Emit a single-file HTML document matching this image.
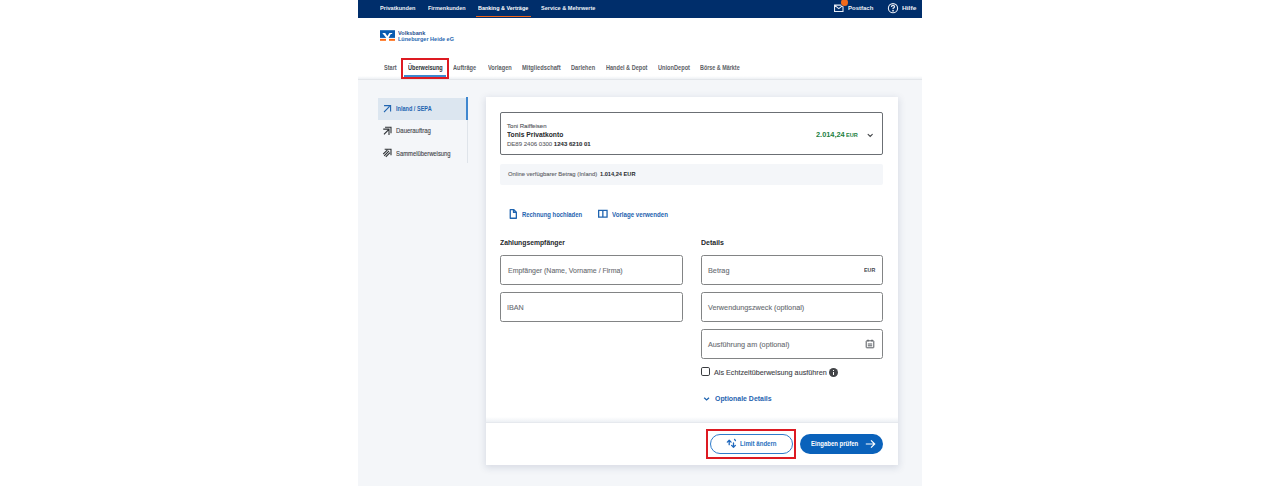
<!DOCTYPE html>
<html><head><meta charset="utf-8"><title>Überweisung</title>
<style>
html,body{margin:0;padding:0;width:1280px;height:486px;overflow:hidden;background:#ffffff;}
body{position:relative;font-family:"Liberation Sans",sans-serif;}
.a{position:absolute;box-sizing:border-box;}
.t{position:absolute;white-space:nowrap;line-height:1;transform-origin:0 0;font-family:"Liberation Sans",sans-serif;}
</style></head><body>
<!-- page frame -->
<div class="a" style="left:358px;top:0;width:564px;height:486px;background:#f4f6f9;"></div>
<!-- top navy bar -->
<div class="a" style="left:358px;top:0;width:564px;height:18px;background:#002e6b;"></div>
<div class="a" style="left:476px;top:15.8px;width:55px;height:1.6px;background:#f06418;"></div>
<!-- white header -->
<div class="a" style="left:358px;top:18px;width:564px;height:62px;background:#ffffff;border-bottom:1px solid #e3e6ea;"></div>
<div class="a" style="left:358px;top:76px;width:564px;height:3px;background:linear-gradient(to bottom,rgba(236,239,243,0),rgba(236,239,243,0.9));"></div>
<!-- logo -->
<svg class="a" style="left:380px;top:30px;" width="15" height="11" viewBox="0 0 15 11">
  <rect x="0" y="0.2" width="15" height="7.7" fill="#0a5cb0"/>
  <rect x="0" y="8.9" width="6" height="1.9" fill="#ff6a10"/>
  <rect x="9" y="8.9" width="6" height="1.9" fill="#ff6a10"/>
  <path d="M2.3 2.9 H5.2 L7.3 6.3 L9.4 2.9 H12.4 L12 4 H10.8 L8.6 7.9 H6.3 Z" fill="#ffffff"/>
</svg>
<!-- red highlight nav -->
<div class="a" style="left:401px;top:58px;width:48px;height:21px;border:2px solid #dd1a22;"></div>
<div class="a" style="left:404px;top:75px;width:42px;height:2px;background:#3c87cf;"></div>

<!-- sidebar -->
<div class="a" style="left:466.5px;top:98px;width:1px;height:65px;background:#dfe4ea;"></div>
<div class="a" style="left:378px;top:98px;width:88px;height:22px;background:#dce6f0;"></div>
<div class="a" style="left:466px;top:97px;width:2px;height:23px;background:#3f87cf;"></div>
<!-- sidebar icons -->
<svg class="a" style="left:380px;top:100px;" width="16" height="16" viewBox="0 0 16 16" fill="none" stroke="#1f64b0" stroke-width="1.1" stroke-linecap="square">
  <path d="M4.6 5.6 H10.6 V11 M4.4 11.6 L9.2 6.8"/>
</svg>
<svg class="a" style="left:380px;top:123px;" width="16" height="16" viewBox="0 0 16 16" fill="none" stroke="#2e3236" stroke-width="1.1" stroke-linecap="square">
  <path d="M5.6 4.3 H11 V9.6 M3.8 6.1 H9 V11.4 M4.4 10.9 L8 7.3"/>
</svg>
<svg class="a" style="left:380px;top:145px;" width="16" height="16" viewBox="0 0 16 16" fill="none" stroke="#2e3236" stroke-width="1.1" stroke-linecap="square">
  <path d="M5.2 4.3 H11 V9.8 M3.6 8.6 L7 5.3 M4.6 10.4 L8.6 6.4 M6.2 11.4 L9.6 8"/>
</svg>
<!-- card -->
<div class="a" style="left:486px;top:97px;width:412px;height:368px;background:#ffffff;box-shadow:0 2px 7px 1px rgba(30,50,95,0.13);"></div>
<!-- account box -->
<div class="a" style="left:500px;top:112px;width:383px;height:43px;border:1px solid #6b6f74;border-radius:2px;background:#fff;"></div>
<svg class="a" style="left:867px;top:132px;" width="7" height="6" viewBox="0 0 7 6" fill="none" stroke="#44474a" stroke-width="1.1" stroke-linecap="round">
  <path d="M1.1 2.3 L3.2 4.4 L5.3 2.3"/>
</svg>
<!-- available amount bar -->
<div class="a" style="left:500px;top:164px;width:383px;height:21px;background:#f4f6f9;border-radius:2px;"></div>

<!-- link icons -->
<svg class="a" style="left:504px;top:205px;" width="20" height="18" viewBox="0 0 20 18" fill="none" stroke="#1f64b0" stroke-width="1.3" stroke-linejoin="round">
  <path d="M6.25 4.55 H9.6 L12.35 7.3 V13.25 H6.25 Z M9.5 4.6 V7.4 H12.3"/>
</svg>
<svg class="a" style="left:590px;top:203px;" width="25" height="20" viewBox="0 0 25 20" fill="none" stroke="#1f64b0" stroke-width="1.3">
  <path d="M8.65 7.45 H17.05 V14.1 H8.65 Z M12.85 7.45 V14.1"/>
</svg>
<!-- inputs -->
<div class="a" style="left:500px;top:255px;width:183px;height:30px;border:1px solid #828485;border-radius:2.5px;"></div>
<div class="a" style="left:500px;top:292px;width:183px;height:30px;border:1px solid #828485;border-radius:2.5px;"></div>
<div class="a" style="left:701px;top:255px;width:182px;height:30px;border:1px solid #828485;border-radius:2.5px;"></div>
<div class="a" style="left:701px;top:292px;width:182px;height:30px;border:1px solid #828485;border-radius:2.5px;"></div>
<div class="a" style="left:701px;top:329px;width:182px;height:30px;border:1px solid #828485;border-radius:2.5px;"></div>
<!-- calendar icon -->
<svg class="a" style="left:865px;top:339px;" width="10" height="10" viewBox="0 0 10 10" fill="none" stroke="#55595e" stroke-width="1">
  <rect x="1.2" y="1.8" width="7.6" height="7" rx="0.5"/>
  <path d="M3 0.6 V2.6 M7 0.6 V2.6 M2.8 5 H7.2 M2.8 6.8 H7.2"/>
</svg>
<!-- checkbox -->
<div class="a" style="left:701px;top:367px;width:9.2px;height:9.2px;border:1.3px solid #393c40;border-radius:1.8px;"></div>
<!-- info icon -->
<div class="a" style="left:828.7px;top:367.7px;width:9.5px;height:9.5px;border-radius:50%;background:#434548;"></div>
<div class="a" style="left:833px;top:371.5px;width:1.2px;height:3.8px;background:#fff;"></div>
<div class="a" style="left:833px;top:369.5px;width:1.2px;height:1.2px;background:#fff;"></div>
<!-- chevron optionale -->
<svg class="a" style="left:703px;top:395px;" width="7" height="7" viewBox="0 0 7 7" fill="none" stroke="#1f64b0" stroke-width="1.3">
  <path d="M1.2 2.7 L3.6 4.9 L6 2.7"/>
</svg>

<!-- separator -->
<div class="a" style="left:486px;top:417px;width:412px;height:5px;background:linear-gradient(to bottom,rgba(230,234,240,0),rgba(230,234,240,0.7));"></div>
<div class="a" style="left:486px;top:422px;width:412px;height:1px;background:#e6e9ee;"></div>
<!-- red highlight button -->
<div class="a" style="left:706px;top:429px;width:90px;height:30px;border:2px solid #dd1a22;"></div>
<div class="a" style="left:710px;top:434px;width:83px;height:20px;border:1.2px solid #2f7ccb;border-radius:10px;background:#fff;"></div>
<svg class="a" style="left:722px;top:434px;" width="20" height="20" viewBox="0 0 20 20" fill="none" stroke="#1f68bd" stroke-width="1.3" stroke-linecap="round" stroke-linejoin="round">
  <path d="M7.2 6.2 V10.7 M5.3 8.1 L7.2 6.2 L9.1 8.1 M11.5 9 V13.3 M9.6 11.4 L11.5 13.3 L13.4 11.4 M12.6 5.4 L13.4 6.6"/>
</svg>
<div class="a" style="left:800px;top:434px;width:83px;height:20px;background:#0a62bb;border-radius:10px;"></div>
<svg class="a" style="left:865px;top:439px;" width="11" height="10" viewBox="0 0 11 10" fill="none" stroke="#ffffff" stroke-width="1.2">
  <path d="M0.8 5 H9.5 M6 1.3 L9.7 5 L6 8.7"/>
</svg>

<!-- top bar icons -->
<svg class="a" style="left:833px;top:2px;" width="12" height="12" viewBox="0 0 12 12" fill="none" stroke="#e8ecf4" stroke-width="1.1">
  <path d="M1.55 3.1 H10 V9.5 H1.55 Z M1.7 3.4 L5.8 6.6 L9.9 3.4"/>
</svg>
<div class="a" style="left:840.5px;top:-0.8px;width:7px;height:7px;border-radius:50%;background:#f26a1b;box-shadow:0 0 0 0.6px #002e6b;"></div>
<svg class="a" style="left:887px;top:2px;" width="12" height="12" viewBox="0 0 12 12" fill="none" stroke="#e8ecf4" stroke-width="1.1">
  <circle cx="6" cy="6.2" r="4.6"/>
  <path d="M4.5 4.9 Q4.5 3.4 6 3.4 Q7.5 3.4 7.5 4.7 Q7.5 5.6 6.1 6.2 V7.1" stroke-width="1.25"/>
  <circle cx="6.05" cy="8.7" r="0.35" fill="#e8ecf4"/>
</svg>

<div class="t" style="left:379.72px;top:5px;font-size:6.2px;font-weight:bold;color:#eef1f7;transform:scaleX(0.9045);">Privatkunden</div>
<div class="t" style="left:428.03px;top:5px;font-size:6.2px;font-weight:bold;color:#eef1f7;transform:scaleX(0.8805);">Firmenkunden</div>
<div class="t" style="left:478.43px;top:5px;font-size:6.2px;font-weight:bold;color:#ffffff;transform:scaleX(0.8801);">Banking &amp; Verträge</div>
<div class="t" style="left:541.22px;top:5px;font-size:6.2px;font-weight:bold;color:#eef1f7;transform:scaleX(0.8945);">Service &amp; Mehrwerte</div>
<div class="t" style="left:847.70px;top:5px;font-size:6.2px;font-weight:bold;color:#eef1f7;transform:scaleX(0.9678);">Postfach</div>
<div class="t" style="left:901.97px;top:5px;font-size:6.2px;font-weight:bold;color:#eef1f7;transform:scaleX(1.0702);">Hilfe</div>
<div class="t" style="left:398.22px;top:30px;font-size:6.2px;font-weight:bold;color:#1f4f8f;transform:scaleX(0.8936);">Volksbank</div>
<div class="t" style="left:398.22px;top:36px;font-size:6.2px;font-weight:bold;color:#2867b0;transform:scaleX(0.8892);">Lüneburger Heide eG</div>
<div class="t" style="left:383.62px;top:65px;font-size:6.6px;font-weight:bold;color:#5d6166;transform:scaleX(0.8420);">Start</div>
<div class="t" style="left:407.52px;top:65px;font-size:6.6px;font-weight:bold;color:#2b2f33;transform:scaleX(0.8393);">Überweisung</div>
<div class="t" style="left:453.42px;top:65px;font-size:6.6px;font-weight:bold;color:#5d6166;transform:scaleX(0.8507);">Aufträge</div>
<div class="t" style="left:487.52px;top:65px;font-size:6.6px;font-weight:bold;color:#5d6166;transform:scaleX(0.8569);">Vorlagen</div>
<div class="t" style="left:521.61px;top:65px;font-size:6.6px;font-weight:bold;color:#5d6166;transform:scaleX(0.8725);">Mitgliedschaft</div>
<div class="t" style="left:571.02px;top:65px;font-size:6.6px;font-weight:bold;color:#5d6166;transform:scaleX(0.8527);">Darlehen</div>
<div class="t" style="left:605.72px;top:65px;font-size:6.6px;font-weight:bold;color:#5d6166;transform:scaleX(0.8445);">Handel &amp; Depot</div>
<div class="t" style="left:657.72px;top:65px;font-size:6.6px;font-weight:bold;color:#5d6166;transform:scaleX(0.8556);">UnionDepot</div>
<div class="t" style="left:700.33px;top:65px;font-size:6.6px;font-weight:bold;color:#5d6166;transform:scaleX(0.8194);">Börse &amp; Märkte</div>
<div class="t" style="left:396.42px;top:106px;font-size:6.4px;font-weight:bold;color:#1f64b0;transform:scaleX(0.8680);">Inland / SEPA</div>
<div class="t" style="left:396.40px;top:128px;font-size:6.4px;font-weight:normal;color:#3c4146;-webkit-text-stroke:0.1px #3c4146;transform:scaleX(0.9353);">Dauerauftrag</div>
<div class="t" style="left:396.41px;top:151px;font-size:6.4px;font-weight:normal;color:#3c4146;-webkit-text-stroke:0.1px #3c4146;transform:scaleX(0.9145);">Sammelüberweisung</div>
<div class="t" style="left:507.10px;top:123px;font-size:6.0px;font-weight:normal;color:#4f5358;-webkit-text-stroke:0.1px #4f5358;transform:scaleX(1.0065);">Toni Raiffeisen</div>
<div class="t" style="left:507.06px;top:131px;font-size:7.0px;font-weight:bold;color:#25282b;transform:scaleX(0.9601);">Tonis Privatkonto</div>
<div class="t" style="left:507.10px;top:141px;font-size:6.2px;font-weight:normal;color:#5f6368;-webkit-text-stroke:0.1px #5f6368;transform:scaleX(0.9729);">DE89 2406 0300 <b style="color:#25282b">1243 6210 01</b></div>
<div class="t" style="left:815.63px;top:131px;font-size:7.0px;font-weight:bold;color:#23803e;transform:scaleX(1.0508);">2.014,24</div>
<div class="t" style="left:845.72px;top:133px;font-size:5.3px;font-weight:bold;color:#23803e;transform:scaleX(1.0509);">EUR</div>
<div class="t" style="left:507.51px;top:172px;font-size:5.8px;font-weight:normal;color:#5f6368;-webkit-text-stroke:0.1px #5f6368;transform:scaleX(1.0139);">Online verfügbarer Betrag (Inland)</div>
<div class="t" style="left:600.22px;top:172px;font-size:5.8px;font-weight:bold;color:#25282b;transform:scaleX(0.9737);">1.014,24 EUR</div>
<div class="t" style="left:522.20px;top:212px;font-size:6.6px;font-weight:bold;color:#1f64b0;transform:scaleX(0.8963);">Rechnung hochladen</div>
<div class="t" style="left:611.69px;top:212px;font-size:6.6px;font-weight:bold;color:#1f64b0;transform:scaleX(0.9338);">Vorlage verwenden</div>
<div class="t" style="left:500.26px;top:239px;font-size:7.2px;font-weight:bold;color:#25282b;transform:scaleX(0.9444);">Zahlungsempfänger</div>
<div class="t" style="left:700.55px;top:239px;font-size:7.2px;font-weight:bold;color:#25282b;transform:scaleX(0.9712);">Details</div>
<div class="t" style="left:507.65px;top:267px;font-size:7.6px;font-weight:normal;color:#676b70;-webkit-text-stroke:0.1px #676b70;transform:scaleX(0.9182);">Empfänger (Name, Vorname / Firma)</div>
<div class="t" style="left:507.34px;top:304px;font-size:7.6px;font-weight:normal;color:#676b70;-webkit-text-stroke:0.1px #676b70;transform:scaleX(0.9426);">IBAN</div>
<div class="t" style="left:707.94px;top:267px;font-size:7.6px;font-weight:normal;color:#676b70;-webkit-text-stroke:0.1px #676b70;transform:scaleX(0.9577);">Betrag</div>
<div class="t" style="left:864.33px;top:268px;font-size:5.3px;font-weight:bold;color:#45494e;transform:scaleX(1.0040);">EUR</div>
<div class="t" style="left:707.94px;top:304px;font-size:7.6px;font-weight:normal;color:#676b70;-webkit-text-stroke:0.1px #676b70;transform:scaleX(0.9538);">Verwendungszweck (optional)</div>
<div class="t" style="left:707.94px;top:341px;font-size:7.6px;font-weight:normal;color:#676b70;-webkit-text-stroke:0.1px #676b70;transform:scaleX(0.9548);">Ausführung am (optional)</div>
<div class="t" style="left:713.64px;top:369px;font-size:7.6px;font-weight:normal;color:#3c4045;-webkit-text-stroke:0.1px #3c4045;transform:scaleX(0.9502);">Als Echtzeitüberweisung ausführen</div>
<div class="t" style="left:715.25px;top:395px;font-size:7.4px;font-weight:bold;color:#1f64b0;transform:scaleX(0.9374);">Optionale Details</div>
<div class="t" style="left:740.39px;top:441px;font-size:6.8px;font-weight:bold;color:#2a72c0;transform:scaleX(0.8974);">Limit ändern</div>
<div class="t" style="left:810.50px;top:441px;font-size:6.8px;font-weight:bold;color:#ffffff;transform:scaleX(0.8783);">Eingaben prüfen</div>
</body></html>
